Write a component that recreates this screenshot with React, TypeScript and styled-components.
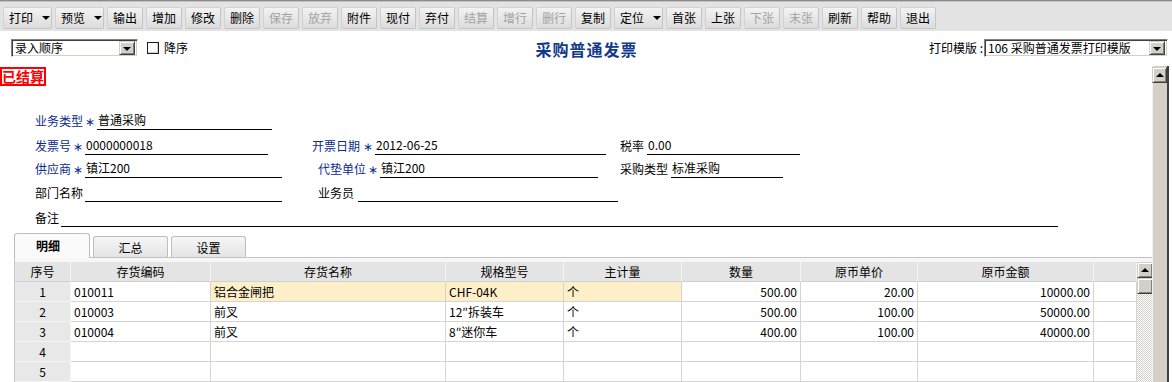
import styled, { createGlobalStyle, css } from "styled-components";

const Global = createGlobalStyle`
  html, body {
    margin: 0;
    padding: 0;
    background: #ffffff;
  }
  body {
    font-family: "Noto Sans CJK SC", "Liberation Sans", sans-serif;
    font-size: 12px;
    color: #000;
  }
`;

const Page = styled.div`
  width: 1172px;
  height: 382px;
  overflow: hidden;
  display: flex;
  flex-direction: column;
  background: #fff;
`;

/* ---------- toolbar ---------- */

const Toolbar = styled.div`
  display: flex;
  align-items: flex-start;
  gap: 3px;
  height: 31px;
  box-sizing: border-box;
  padding: 6px 3px 0;
  background: #e3e3e3;
  border-top: 1px solid #8a8a8a;
  box-shadow: inset 0 1px 0 #c4c4c4;
`;

const ToolButton = styled.div<{ $w: number; $off?: boolean; $menu?: boolean }>`
  width: ${(p) => p.$w}px;
  height: 22px;
  box-sizing: border-box;
  display: flex;
  align-items: center;
  justify-content: ${(p) => (p.$menu ? "flex-start" : "center")};
  padding-left: ${(p) => (p.$menu ? "5px" : "0")};
  background: linear-gradient(#f3f3f3, #e6e6e6 55%, #dcdcdc);
  border: 1px solid #d2d2d2;
  border-right-color: #c4c4c4;
  border-bottom-color: #c4c4c4;
  border-radius: 2px;
  color: ${(p) => (p.$off ? "#a3a3a3" : "#000")};
  line-height: 14px;
  white-space: nowrap;
`;

const MenuArrow = styled.span`
  margin-left: 9px;
  width: 0;
  height: 0;
  border-left: 4px solid transparent;
  border-right: 4px solid transparent;
  border-top: 4px solid #000;
`;

/* ---------- header bar ---------- */

const HeaderBar = styled.div`
  display: grid;
  grid-template-columns: 1fr auto 1fr;
  height: 35px;
  box-sizing: border-box;
  padding: 8px 4px 0 11px;
`;

const HeaderLeft = styled.div`
  display: flex;
  align-items: center;
  height: 18px;
`;

const HeaderRight = styled.div`
  display: flex;
  align-items: center;
  justify-content: flex-end;
  height: 18px;
`;

const Title = styled.div`
  font-size: 16px;
  font-weight: bold;
  letter-spacing: 1px;
  color: #123a8a;
  line-height: 18px;
  padding-top: 1px;
  margin-right: 6px;
`;

const Select = styled.div<{ $w: number }>`
  width: ${(p) => p.$w}px;
  height: 18px;
  box-sizing: border-box;
  display: flex;
  align-items: center;
  justify-content: space-between;
  background: #fff;
  border: 1px solid;
  border-color: #808080 #fff #fff #808080;
  box-shadow: inset 1px 1px 0 #404040, inset -1px -1px 0 #d4d0c8;
  padding: 0 2px 0 3px;
`;

const SelectText = styled.span`
  line-height: 14px;
  white-space: nowrap;
`;

const ClassicButton = styled.div<{ $w: number; $h: number }>`
  width: ${(p) => p.$w}px;
  height: ${(p) => p.$h}px;
  box-sizing: border-box;
  flex-shrink: 0;
  display: flex;
  align-items: center;
  justify-content: center;
  background: #d4d0c8;
  border: 1px solid;
  border-color: #d4d0c8 #404040 #404040 #d4d0c8;
  box-shadow: inset 1px 1px 0 #fff, inset -1px -1px 0 #808080;
`;

const TriDown = styled.span`
  width: 0;
  height: 0;
  border-left: 4px solid transparent;
  border-right: 4px solid transparent;
  border-top: 4px solid #000;
  margin-top: 1px;
`;

const TriUp = styled.span`
  width: 0;
  height: 0;
  border-left: 4px solid transparent;
  border-right: 4px solid transparent;
  border-bottom: 4px solid #000;
  margin-bottom: 1px;
`;

const CheckBox = styled.span`
  width: 12px;
  height: 12px;
  box-sizing: border-box;
  margin-left: 9px;
  border: 1px solid #1c1c1c;
  box-shadow: inset -1px -1px 0 #d4d0c8;
  background: #fff;
`;

const CheckLabel = styled.span`
  margin-left: 5px;
  line-height: 14px;
`;

const PlainText = styled.span`
  line-height: 14px;
  margin-right: 1px;
  white-space: nowrap;
`;

/* ---------- body ---------- */

const Body = styled.div`
  flex: 1;
  display: flex;
  padding-right: 3px;
  background: #fff;
  min-height: 0;
`;

const Content = styled.div`
  flex: 1;
  display: flex;
  flex-direction: column;
  min-width: 0;
`;

const OuterScroll = styled.div`
  width: 15px;
  display: flex;
  flex-direction: column;
  background: #d4d0c8;
  border-right: 2px solid #404040;
  box-shadow: inset 1px 0 0 #f2f2f2;
  padding-top: 1px;
`;

const Stamp = styled.div`
  align-self: flex-start;
  margin-top: 1px;
  height: 19px;
  box-sizing: border-box;
  border: 2px solid #ff0000;
  color: #ff0000;
  font-size: 14px;
  font-weight: bold;
  line-height: 15px;
  padding: 0;
`;

const Form = styled.div`
  display: flex;
  flex-direction: column;
  padding: 20px 0 0 35px;
`;

const FormRow = styled.div<{ $h: number }>`
  display: flex;
  align-items: flex-end;
  height: ${(p) => p.$h}px;
`;

const Field = styled.div<{ $slot?: number }>`
  display: flex;
  align-items: flex-end;
  ${(p) =>
    p.$slot
      ? css`
          width: ${p.$slot}px;
          flex-shrink: 0;
        `
      : ""}
`;

const Label = styled.span<{ $req?: boolean }>`
  line-height: 16px;
  padding-bottom: 1px;
  color: ${(p) => (p.$req ? "#0b2b8f" : "#000")};
  white-space: nowrap;
`;

const Star = styled.span<{ $w: number }>`
  width: ${(p) => p.$w}px;
  text-align: center;
  color: #0b2b8f;
  line-height: 16px;
  padding-bottom: 1px;
`;

const Input = styled.div<{ $w: number; $gap?: number }>`
  width: ${(p) => p.$w}px;
  margin-left: ${(p) => p.$gap ?? 0}px;
  height: 17px;
  box-sizing: border-box;
  border-bottom: 1px solid #000;
  line-height: 14px;
  padding-left: 1px;
  white-space: nowrap;
`;

/* ---------- tabs ---------- */

const TabStrip = styled.div`
  display: flex;
  align-items: flex-end;
  gap: 3px;
  height: 24px;
  margin: 6px 0 0 14px;
  position: relative;
  z-index: 1;
`;

const Tab = styled.div<{ $active?: boolean }>`
  width: ${(p) => (p.$active ? 76 : 75)}px;
  box-sizing: border-box;
  display: flex;
  justify-content: center;
  border: 1px solid #bdbdbd;
  border-bottom: none;
  border-radius: 3px 3px 0 0;
  ${(p) =>
    p.$active
      ? css`
          height: 25px;
          margin-bottom: -1px;
          background: #fafafa;
          font-weight: bold;
          padding: 5px 8px 0 0;
          line-height: 14px;
        `
      : css`
          height: 21px;
          background: linear-gradient(#f6f6f6, #e4e4e4);
          padding-top: 4px;
          line-height: 14px;
        `}
`;

/* ---------- grid ---------- */

const GridPanel = styled.div`
  flex: 1;
  display: flex;
  margin-left: 14px;
  border-top: 1px solid #c2c2c2;
  border-left: 1px solid #c8c8c8;
  padding-top: 4px;
  background: #f7f7f7;
  min-height: 0;
`;

const GridTable = styled.div<{ $cols: string }>`
  display: grid;
  grid-template-columns: ${(p) => p.$cols};
  grid-auto-rows: 20px;
  align-content: start;
  background: #fff;
`;

const HeadCell = styled.div`
  background: #e4e4e4;
  border-right: 1px solid #f6f6f6;
  border-bottom: 1px solid #d0d0d0;
  display: flex;
  align-items: center;
  justify-content: center;
  line-height: 14px;
`;

const Cell = styled.div<{ $align: "left" | "center" | "right"; $bg?: string }>`
  background: ${(p) => p.$bg ?? "#fff"};
  border-right: 1px solid #d4d4d4;
  border-bottom: 1px solid #d4d4d4;
  display: flex;
  align-items: center;
  justify-content: ${(p) =>
    p.$align === "left" ? "flex-start" : p.$align === "right" ? "flex-end" : "center"};
  padding: 0 3px;
  line-height: 14px;
  white-space: nowrap;
  overflow: hidden;
`;

const IndexCell = styled(Cell)`
  background: #e8e8e8;
  border-right-color: #f4f4f4;
  border-bottom-color: #f4f4f4;
`;

const InnerScroll = styled.div`
  width: 16px;
  display: flex;
  flex-direction: column;
  background: repeating-conic-gradient(#d4d0c8 0 25%, #ffffff 0 50%) 0 0 / 2px 2px;
`;

const columns = [
  { t: "序号", w: 56 },
  { t: "存货编码", w: 140 },
  { t: "存货名称", w: 235 },
  { t: "规格型号", w: 118 },
  { t: "主计量", w: 118 },
  { t: "数量", w: 119 },
  { t: "原币单价", w: 117 },
  { t: "原币金额", w: 176 },
  { t: "", w: 43 },
];

const align: ("left" | "center" | "right")[] = [
  "center",
  "left",
  "left",
  "left",
  "left",
  "right",
  "right",
  "right",
  "left",
];

const rows = [
  ["1", "010011", "铝合金闸把", "CHF-04K", "个", "500.00", "20.00", "10000.00", ""],
  ["2", "010003", "前叉", "12″拆装车", "个", "500.00", "100.00", "50000.00", ""],
  ["3", "010004", "前叉", "8″迷你车", "个", "400.00", "100.00", "40000.00", ""],
  ["4", "", "", "", "", "", "", "", ""],
  ["5", "", "", "", "", "", "", "", ""],
];

const tools = [
  { t: "打印", menu: true },
  { t: "预览", menu: true },
  { t: "输出" },
  { t: "增加" },
  { t: "修改" },
  { t: "删除" },
  { t: "保存", off: true },
  { t: "放弃", off: true },
  { t: "附件" },
  { t: "现付" },
  { t: "弃付" },
  { t: "结算", off: true },
  { t: "增行", off: true },
  { t: "删行", off: true },
  { t: "复制" },
  { t: "定位", menu: true },
  { t: "首张" },
  { t: "上张" },
  { t: "下张", off: true },
  { t: "末张", off: true },
  { t: "刷新" },
  { t: "帮助" },
  { t: "退出" },
];

const App = () => {
  return (
    <Page>
      <Global />
      <Toolbar>
        {tools.map((b) => (
          <ToolButton key={b.t} $w={b.menu ? 49 : 36} $off={b.off} $menu={b.menu}>
            {b.t}
            {b.menu && <MenuArrow />}
          </ToolButton>
        ))}
      </Toolbar>

      <HeaderBar>
        <HeaderLeft>
          <Select $w={127}>
            <SelectText>录入顺序</SelectText>
            <ClassicButton $w={16} $h={14}>
              <TriDown />
            </ClassicButton>
          </Select>
          <CheckBox />
          <CheckLabel>降序</CheckLabel>
        </HeaderLeft>
        <Title>采购普通发票</Title>
        <HeaderRight>
          <PlainText>打印模版 :</PlainText>
          <Select $w={184}>
            <SelectText>106 采购普通发票打印模版</SelectText>
            <ClassicButton $w={16} $h={14}>
              <TriDown />
            </ClassicButton>
          </Select>
        </HeaderRight>
      </HeaderBar>

      <Body>
        <Content>
          <Stamp>已结算</Stamp>
          <Form>
            <FormRow $h={24}>
              <Field>
                <Label $req>业务类型</Label>
                <Star $w={14}>∗</Star>
                <Input $w={175}>普通采购</Input>
              </Field>
            </FormRow>
            <FormRow $h={25}>
              <Field $slot={277}>
                <Label $req>发票号</Label>
                <Star $w={14}>∗</Star>
                <Input $w={183}>0000000018</Input>
              </Field>
              <Field $slot={308}>
                <Label $req>开票日期</Label>
                <Star $w={15}>∗</Star>
                <Input $w={231}>2012-06-25</Input>
              </Field>
              <Field>
                <Label>税率</Label>
                <Input $w={153} $gap={3}>0.00</Input>
              </Field>
            </FormRow>
            <FormRow $h={23}>
              <Field $slot={283}>
                <Label $req>供应商</Label>
                <Star $w={14}>∗</Star>
                <Input $w={197}>镇江200</Input>
              </Field>
              <Field $slot={302}>
                <Label $req>代垫单位</Label>
                <Star $w={14}>∗</Star>
                <Input $w={218}>镇江200</Input>
              </Field>
              <Field>
                <Label>采购类型</Label>
                <Input $w={112} $gap={3}>标准采购</Input>
              </Field>
            </FormRow>
            <FormRow $h={24}>
              <Field $slot={283}>
                <Label>部门名称</Label>
                <Input $w={197} $gap={2} />
              </Field>
              <Field>
                <Label>业务员</Label>
                <Input $w={260} $gap={4} />
              </Field>
            </FormRow>
            <FormRow $h={25}>
              <Field>
                <Label>备注</Label>
                <Input $w={997} $gap={2} />
              </Field>
            </FormRow>
          </Form>

          <TabStrip>
            <Tab $active>明细</Tab>
            <Tab>汇总</Tab>
            <Tab>设置</Tab>
          </TabStrip>

          <GridPanel>
            <GridTable $cols={columns.map((c) => `${c.w}px`).join(" ")}>
              {columns.map((c, i) => (
                <HeadCell key={`h${i}`}>{c.t}</HeadCell>
              ))}
              {rows.map((r, ri) =>
                r.map((v, ci) =>
                  ci === 0 ? (
                    <IndexCell key={`${ri}-${ci}`} $align="center">
                      {v}
                    </IndexCell>
                  ) : (
                    <Cell
                      key={`${ri}-${ci}`}
                      $align={align[ci]}
                      $bg={ri === 0 && ci >= 2 && ci <= 4 ? "#fdefc8" : undefined}
                    >
                      {v}
                    </Cell>
                  )
                )
              )}
            </GridTable>
            <InnerScroll>
              <ClassicButton $w={16} $h={16}>
                <TriUp />
              </ClassicButton>
              <ClassicButton $w={16} $h={16} />
            </InnerScroll>
          </GridPanel>
        </Content>
        <OuterScroll>
          <ClassicButton $w={15} $h={16}>
            <TriUp />
          </ClassicButton>
        </OuterScroll>
      </Body>
    </Page>
  );
};

export default App;
